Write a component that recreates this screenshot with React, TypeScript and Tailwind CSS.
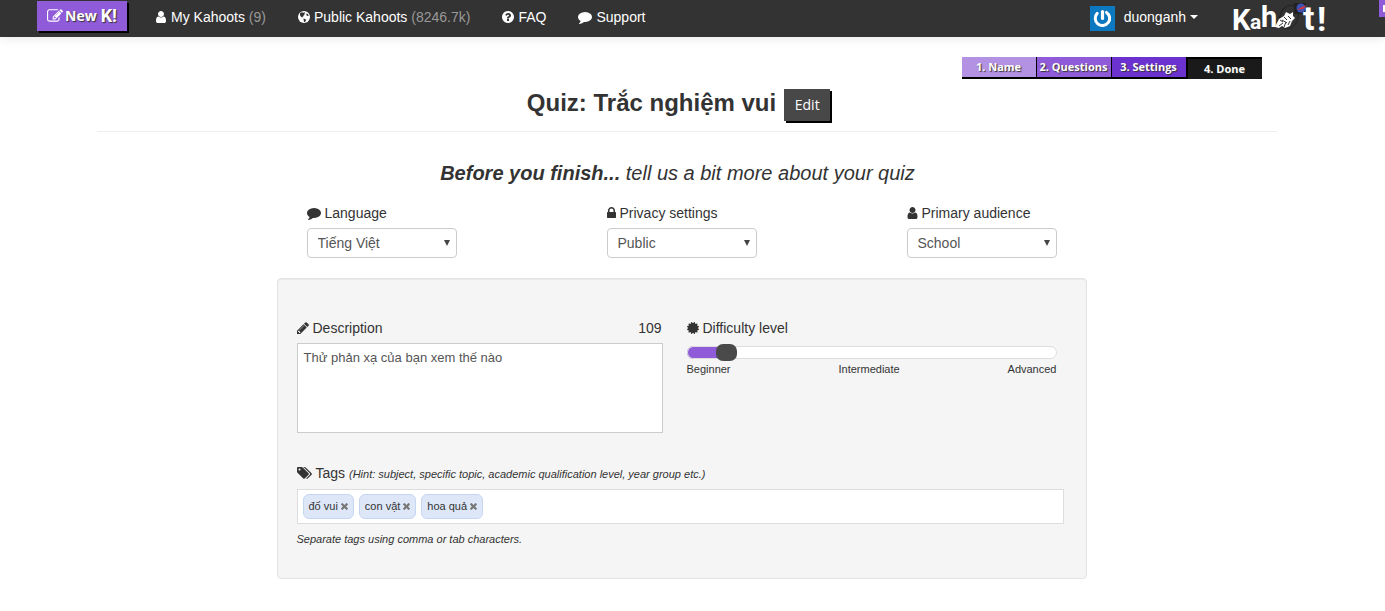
import { useState, type ReactNode } from "react";
import clsx from "clsx";

const paths = {
  user: "M1536 1399q0 109-62.5 187t-150.5 78h-854q-88 0-150.5-78t-62.5-187q0-85 8.5-160.5t31.5-152 58.5-131 94-89 134.5-34.5q131 128 313 128t313-128q76 0 134.5 34.5t94 89 58.5 131 31.5 152 8.5 160.5zm-256-887q0 159-112.5 271.5t-271.5 112.5-271.5-112.5-112.5-271.5 112.5-271.5 271.5-112.5 271.5 112.5 112.5 271.5z",
  lock: "M640 768h512v-192q0-106-75-181t-181-75-181 75-75 181v192zm832 96v576q0 40-28 68t-68 28h-960q-40 0-68-28t-28-68v-576q0-40 28-68t68-28h32v-192q0-184 132-316t316-132 316 132 132 316v192h32q40 0 68 28t28 68z",
  comment:
    "M1792 896q0 174-120 321.5t-326 233-450 85.5q-70 0-145-8-198 175-460 242-49 14-114 22-17 2-30.5-9t-17.5-29v-1q-3-4-.5-12t2-10 4.5-9.5l6-9 7-8.5 8-9q7-8 31-34.5t34.5-38 31-39.5 32.5-51 27-59 26-76q-157-89-247.5-220t-90.5-281q0-130 71-248.5t191-204.5 286-136.5 348-50.5q244 0 450 85.5t326 233 120 321.5z",
  question:
    "M1024 1376v-192q0-14-9-23t-23-9h-192q-14 0-23 9t-9 23v192q0 14 9 23t23 9h192q14 0 23-9t9-23zm256-672q0-88-55.5-163t-138.5-116-170-41q-243 0-371 213-15 24 8 42l132 100q7 6 19 6 16 0 25-12 53-68 86-92 34-24 86-24 48 0 85.5 26t37.5 59q0 38-20 61t-68 45q-63 28-115.5 86.5t-52.5 125.5v36q0 14 9 23t23 9h192q14 0 23-9t9-23q0-19 21.5-49.5t54.5-49.5q32-18 49-28.5t46-35 44.5-48 28-60.5 12.5-81zm384 192q0 209-103 385.5t-279.5 279.5-385.5 103-385.5-103-279.5-279.5-103-385.5 103-385.5 279.5-279.5 385.5-103 385.5 103 279.5 279.5 103 385.5z",
  pencil:
    "M491 1536l91-91-235-235-91 91v107h128v128h107zm523-928q0-22-22-22-10 0-17 7l-542 542q-7 7-7 17 0 22 22 22 10 0 17-7l542-542q7-7 7-17zm-54-192l416 416-832 832h-416v-416zm683 96q0 53-37 90l-166 166-416-416 166-165q36-38 90-38 53 0 91 38l235 234q37 39 37 91z",
  certificate:
    "M1504 896l138 135q30 28 20 70-12 41-52 51l-188 48 53 186q12 41-19 70-29 31-70 19l-186-53-48 188q-10 40-51 52-12 2-19 2-31 0-51-22l-135-138-135 138q-28 30-70 20-41-11-51-52l-48-188-186 53q-41 12-70-19-31-29-19-70l53-186-188-48q-40-10-52-51-10-42 20-70l138-135-138-135q-30-28-20-70 12-41 52-51l188-48-53-186q-12-41 19-70 29-31 70-19l186 53 48-188q10-41 51-51 41-12 70 19l135 139 135-139q29-30 70-19 41 10 51 51l48 188 186-53q41-12 70 19 31 29 19 70l-53 186 188 48q40 10 52 51 10 42-20 70z",
  tags: "M448 448q0-53-37.5-90.5t-90.5-37.5-90.5 37.5-37.5 90.5 37.5 90.5 90.5 37.5 90.5-37.5 37.5-90.5zm1067 576q0 53-37 90l-491 492q-39 37-91 37-53 0-90-37l-715-716q-38-37-64.5-101t-26.5-117v-416q0-52 38-90t90-38h416q53 0 117 26.5t102 64.5l715 714q37 39 37 91zm384 0q0 53-37 90l-491 492q-39 37-91 37-36 0-59-14t-53-45l470-470q37-37 37-90 0-52-37-91l-715-714q-38-38-102-64.5t-117-26.5h224q53 0 117 26.5t102 64.5l715 714q37 39 37 91z",
  edit: "M888 1184l116-116-152-152-116 116v56h96v96h56zm440-720q-16-16-33 1l-350 350q-17 17-1 33t33-1l350-350q17-17 1-33zm80 594v190q0 119-84.5 203.5t-203.5 84.5h-832q-119 0-203.5-84.5t-84.5-203.5v-832q0-119 84.5-203.5t203.5-84.5h832q63 0 117 25 15 7 18 23 3 17-9 29l-49 49q-14 14-32 8-23-6-45-6h-832q-66 0-113 47t-47 113v832q0 66 47 113t113 47h832q66 0 113-47t47-113v-126q0-13 9-22l64-64q15-15 35-7t20 29zm-96-738l288 288-672 672h-288v-288zm444 132l-92 92-288-288 92-92q28-28 68-28t68 28l152 152q28 28 28 68t-28 68z",
  times:
    "M1490 1322q0 40-28 68l-136 136q-28 28-68 28t-68-28l-294-294-294 294q-28 28-68 28t-68-28l-136-136q-28-28-28-68t28-68l294-294-294-294q-28-28-28-68t28-68l136-136q28-28 68-28t68 28l294 294 294-294q28-28 68-28t68 28l136 136q28 28 28 68t-28 68l-294 294 294 294q28 28 28 68z",
};

function Icon({
  name,
  className = "h-3.5 w-3.5",
  viewBox = "0 0 1792 1792",
}: {
  name: keyof typeof paths;
  className?: string;
  viewBox?: string;
}) {
  return (
    <svg viewBox={viewBox} fill="currentColor" aria-hidden="true" className={clsx("shrink-0", className)}>
      <path d={paths[name]} />
    </svg>
  );
}

function GlobeIcon() {
  return (
    <svg viewBox="0 0 12 12" className="h-3 w-3 shrink-0" aria-hidden="true">
      <circle cx="6" cy="6" r="6" fill="#fff" />
      <path d="M2 2.2L4 1.2l1.2.6 1.2-.6.8.9-1 .8.4.9-1.2.9-.2 1-1 .1.3 1L3.2 5.9 2 4.2z" fill="#333" />
      <path d="M8.2 2.6l1.6.3 1 1.6-.9.5-1.3-.6zM5.4 7.6l1.8.4 1 1-1.2 1.9-1 .1z" fill="#333" />
    </svg>
  );
}

function Avatar() {
  return (
    <svg viewBox="0 0 25 25" className="mr-[9px] h-[25px] w-[25px]" aria-hidden="true">
      <path d="M0 0h25v25H0z" fill="#0b78c0" />
      <path d="M7.2 7.4a7.2 7.2 0 1 0 9.3-1" fill="none" stroke="#fff" strokeWidth="3" strokeLinecap="round" />
      <path d="M12.5 5.5v7" stroke="#fff" strokeWidth="3.2" strokeLinecap="round" />
    </svg>
  );
}

function Logo() {
  return (
    <svg
      viewBox="0 0 100 36"
      className="h-9 w-[100px] overflow-visible fill-white font-[Roboto,sans-serif] font-bold"
      role="img"
      aria-label="Kahoot!"
    >
      <text x="0" y="30" fontSize="29">K</text>
      <text x="18" y="29" fontSize="21">a</text>
      <text x="29" y="27" fontSize="29">h</text>
      <ellipse cx="57" cy="17" rx="9" ry="12" fill="none" stroke="#222" strokeWidth="1" transform="rotate(20 57 17)" />
      <path d="M43 27l4-8 5-3 2-4 4 2 3-2v4l2 2-3 3-2 5-5 2-3-2-3 2z" />
      <path d="M48 20l3 2m1-5l3 3m1-4l3 3m-12 7l4-3m1 4l2-5m2 3l2-4m-8-1l5 3" stroke="#333" strokeWidth="1" fill="none" />
      <rect x="62" y="3" width="12" height="11" fill="#222" />
      <circle cx="69" cy="8" r="4.5" fill="#3f51b5" />
      <path d="M65 10l5-3 5-2-4 4z" fill="#d33" />
      <text x="71" y="30" fontSize="34">t</text>
      <text x="85" y="31" fontSize="34">!</text>
    </svg>
  );
}

function NavLink({ icon, label, count }: { icon: ReactNode; label: string; count?: string }) {
  return (
    <a href="#" className="flex items-center gap-1 whitespace-nowrap text-white">
      {icon}
      <span>
        {label} {count && <span className="text-[#999]">({count})</span>}
      </span>
    </a>
  );
}

function Navbar() {
  return (
    <header className="flex h-[37px] items-start bg-[#333] text-sm shadow-[0_1px_10px_rgba(0,0,0,0.1)]">
      <button
        type="button"
        className="mt-px ml-[37px] flex h-[30px] w-[90px] items-center justify-center bg-[#8f5bd8] text-white shadow-[2px_2px_0_#000]"
      >
        <Icon name="edit" className="mr-0.5 h-4 w-4" />
        <span className="font-['Open_Sans',sans-serif] text-sm font-bold [text-shadow:1px_1px_1px_#333]">New</span>
        <span className="ml-1 font-[Roboto,sans-serif] text-lg font-bold [text-shadow:1px_1px_1px_#333]">K!</span>
      </button>
      <nav className="ml-7 flex h-[34px] items-center gap-8">
        <NavLink
          icon={<Icon name="user" className="h-3.5 w-3" viewBox="128 0 1536 1792" />}
          label="My Kahoots"
          count="9"
        />
        <NavLink icon={<GlobeIcon />} label="Public Kahoots" count="8246.7k" />
        <NavLink icon={<Icon name="question" className="h-3.5 w-3" viewBox="128 0 1536 1792" />} label="FAQ" />
        <NavLink icon={<Icon name="comment" />} label="Support" />
      </nav>
      <div className="ml-auto flex">
        <button type="button" className="mt-1.5 flex h-[25px] items-center text-white">
          <Avatar />
          <span className="-mt-1">duonganh</span>
          <span className="-mt-1 ml-1 border-x-4 border-t-4 border-x-transparent border-t-white" />
        </button>
        <a href="#" className="ml-[34px]">
          <Logo />
        </a>
        <div className="ml-[47px] flex h-[17px] w-1.5 items-center justify-end bg-[#8f5bd8]">
          <span className="h-[7px] w-0.5 bg-white" />
        </div>
      </div>
    </header>
  );
}

const steps = [
  { label: "1. Name", className: "bg-[#b392e4] border-b-2 border-r" },
  { label: "2. Questions", className: "bg-[#8f5bd8] border-b-2 border-r" },
  { label: "3. Settings", className: "bg-[#6c32cf] border-b-2 border-r" },
  { label: "4. Done", className: "bg-[#1a1a1a] border-t-2 border-l" },
];

function Steps() {
  return (
    <ol className="mr-[15px] flex justify-end font-['Open_Sans',sans-serif] text-[11px] leading-5 font-bold text-white [text-shadow:1px_1px_1px_#333]">
      {steps.map((s) => (
        <li key={s.label} className={clsx("w-[75px] border-black text-center whitespace-nowrap", s.className)}>
          {s.label}
        </li>
      ))}
    </ol>
  );
}

function SelectField({ id, icon, label, options }: { id: string; icon: ReactNode; label: string; options: string[] }) {
  return (
    <div className="w-[150px]">
      <label htmlFor={id} className="mb-[5px] flex h-5 items-center gap-1 whitespace-nowrap">
        {icon}
        {label}
      </label>
      <div className="relative">
        <select
          id={id}
          className="h-[30px] w-full appearance-none rounded-[4px] border border-[#ccc] bg-white pr-6 pl-2.5 text-[#555]"
        >
          {options.map((o) => (
            <option key={o}>{o}</option>
          ))}
        </select>
        <svg viewBox="0 0 6 6" className="pointer-events-none absolute top-3 right-[7px] h-1.5 w-1.5 fill-[#444]" aria-hidden="true">
          <path d="M0 0h6L3 6z" />
        </svg>
      </div>
    </div>
  );
}

function DifficultySlider() {
  const [level, setLevel] = useState(1);
  const filled = 5 + (level / 12) * 90;

  return (
    <div className="w-[370px]">
      <label htmlFor="difficulty" className="flex h-5 items-center gap-1">
        <Icon name="certificate" className="h-3.5 w-3" viewBox="128 0 1536 1792" />
        Difficulty level
      </label>
      <input
        id="difficulty"
        type="range"
        min={0}
        max={12}
        value={level}
        onChange={(e) => setLevel(Number(e.target.value))}
        style={{ backgroundImage: `linear-gradient(to right, #8f5bd8 ${filled}%, #fff ${filled}%)` }}
        className="mt-2 block h-[13px] w-full appearance-none rounded-full shadow-[inset_0_0_0_1px_#ddd] [&::-webkit-slider-thumb]:h-[17px] [&::-webkit-slider-thumb]:w-[21px] [&::-webkit-slider-thumb]:appearance-none [&::-webkit-slider-thumb]:rounded-[7px] [&::-webkit-slider-thumb]:bg-[#4a4a4a]"
      />
      <div className="mt-0.5 flex justify-between text-[11px] leading-4">
        <span>Beginner</span>
        <span>Intermediate</span>
        <span>Advanced</span>
      </div>
    </div>
  );
}

function TagsField() {
  const [tags, setTags] = useState(["đố vui", "con vật", "hoa quả"]);

  return (
    <div className="mr-[3px]">
      <label htmlFor="tags" className="flex h-5 items-center gap-1">
        <Icon name="tags" viewBox="0 0 1920 1792" className="h-3.5 w-[15px]" />
        <span>
          Tags <em className="text-[11px]">(Hint: subject, specific topic, academic qualification level, year group etc.)</em>
        </span>
      </label>
      <div className="mt-1.5 flex h-[35px] items-center gap-[5px] border border-[#ddd] bg-white px-[5px]">
        {tags.map((tag) => (
          <span
            key={tag}
            className="flex h-[25px] items-center gap-[3px] rounded-md border border-[#c5d6f3] bg-[#dde7f8] px-[5px] text-[11px] whitespace-nowrap"
          >
            {tag}
            <button
              type="button"
              aria-label={`Remove ${tag}`}
              onClick={() => setTags(tags.filter((t) => t !== tag))}
              className="text-[#777]"
            >
              <Icon name="times" className="h-[7px] w-[7px]" viewBox="300 360 1200 1200" />
            </button>
          </span>
        ))}
        <input id="tags" type="text" className="min-w-0 flex-1 outline-none" />
      </div>
      <p className="mt-1.5 text-[11px] leading-[18px] italic">Separate tags using comma or tab characters.</p>
    </div>
  );
}

export default function App() {
  const [description, setDescription] = useState("Thử phản xạ của bạn xem thế nào");

  return (
    <div className="bg-white font-['Liberation_Sans',Arial,sans-serif] text-sm text-[#333]">
      <Navbar />
      <div className="pr-3">
        <main className="mx-auto max-w-[1180px] pt-5">
          <Steps />
          <div className="mt-2.5 flex h-[43px] items-start justify-center gap-2 border-b border-[#eee] pr-4">
            <h1 className="text-2xl leading-7 font-bold">Quiz: Trắc nghiệm vui</h1>
            <button
              type="button"
              className="h-8 w-[46px] bg-[#484848] font-['Open_Sans',sans-serif] text-sm text-white shadow-[2px_2px_0_#000]"
            >
              Edit
            </button>
          </div>
          <h2 className="mt-[27px] pr-[18px] text-center text-xl leading-7 italic">
            <strong>Before you finish...</strong> tell us a bit more about your quiz
          </h2>

          <form className="mx-auto mt-4 w-[820px] pr-2.5">
            <div className="flex justify-between px-[30px]">
              <SelectField id="language" icon={<Icon name="comment" />} label="Language" options={["Tiếng Việt", "English"]} />
              <SelectField
                id="privacy"
                icon={<Icon name="lock" className="h-3.5 w-[9px]" viewBox="320 0 1152 1792" />}
                label="Privacy settings"
                options={["Public", "Private"]}
              />
              <SelectField
                id="audience"
                icon={<Icon name="user" className="h-3.5 w-[11px]" viewBox="192 0 1408 1792" />}
                label="Primary audience"
                options={["School", "University", "Business"]}
              />
            </div>

            <section className="mt-5 rounded-[4px] border border-[#e3e3e3] bg-[#f5f5f5] px-[19px] pt-[39px] pb-[30px] shadow-[inset_0_1px_1px_rgba(0,0,0,0.05)]">
              <div className="flex">
                <div className="mr-6 w-[366px]">
                  <div className="flex h-5 items-center justify-between pr-px">
                    <label htmlFor="description" className="flex items-center gap-1">
                      <Icon name="pencil" className="h-3.5 w-3" viewBox="128 0 1536 1792" />
                      Description
                    </label>
                    <span>109</span>
                  </div>
                  <textarea
                    id="description"
                    value={description}
                    onChange={(e) => setDescription(e.target.value)}
                    className="mt-[5px] block h-[90px] w-full resize-none border border-[#ccc] bg-white px-1.5 py-1 text-[13px] leading-5 text-[#555]"
                  />
                </div>
                <DifficultySlider />
              </div>
              <div className="mt-[30px]">
                <TagsField />
              </div>
            </section>
          </form>
        </main>
      </div>
    </div>
  );
}
